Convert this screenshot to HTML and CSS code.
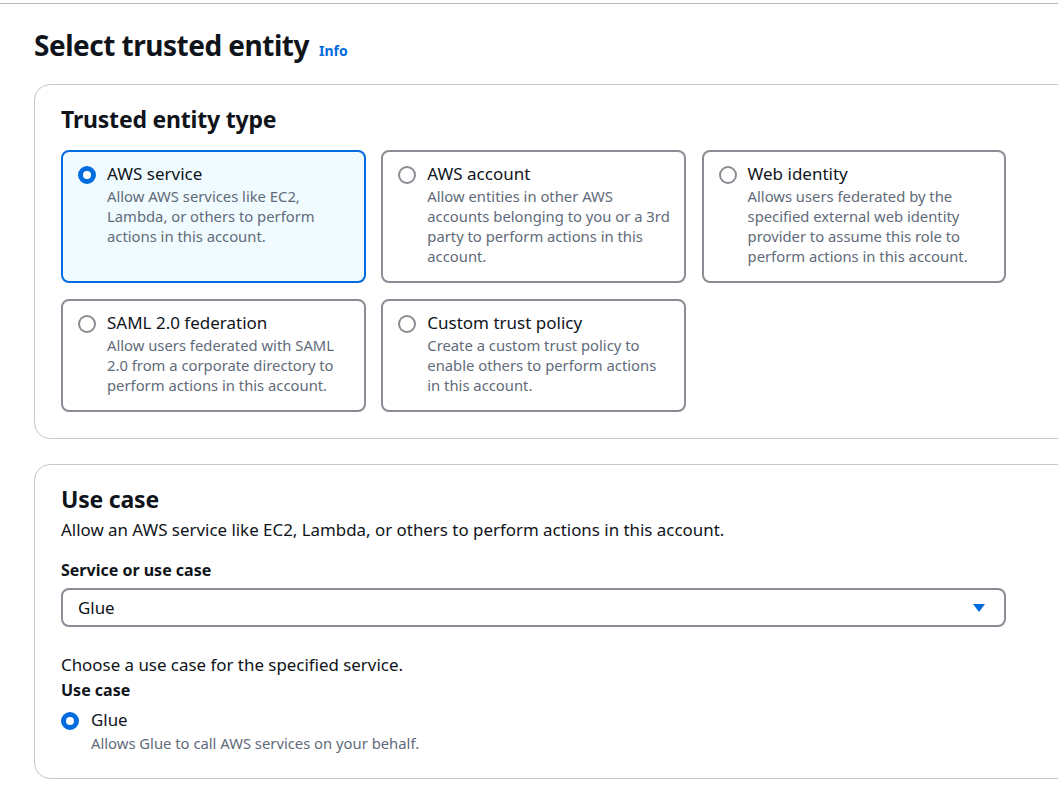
FILE: index.html
```html
<!DOCTYPE html>
<html>
<head>
<meta charset="utf-8">
<link rel="stylesheet" href="styles.css">
</head>
<body>
<div class="page">
  <div class="topline"></div>
  <h1 class="page-title">Select trusted entity <a class="info">Info</a></h1>

  <section class="panel panel-entity">
    <h2 class="panel-title">Trusted entity type</h2>
    <div class="tiles">
      <div class="tile selected">
        <span class="radio on"></span>
        <div class="tile-text">
          <div class="tile-title">AWS service</div>
          <div class="tile-desc">Allow AWS services like EC2, Lambda, or others to perform actions in this account.</div>
        </div>
      </div>
      <div class="tile">
        <span class="radio"></span>
        <div class="tile-text">
          <div class="tile-title">AWS account</div>
          <div class="tile-desc">Allow entities in other AWS accounts belonging to you or a 3rd party to perform actions in this account.</div>
        </div>
      </div>
      <div class="tile">
        <span class="radio"></span>
        <div class="tile-text">
          <div class="tile-title">Web identity</div>
          <div class="tile-desc">Allows users federated by the specified external web identity provider to assume this role to perform actions in this account.</div>
        </div>
      </div>
      <div class="tile">
        <span class="radio"></span>
        <div class="tile-text">
          <div class="tile-title">SAML 2.0 federation</div>
          <div class="tile-desc">Allow users federated with SAML 2.0 from a corporate directory to perform actions in this account.</div>
        </div>
      </div>
      <div class="tile">
        <span class="radio"></span>
        <div class="tile-text">
          <div class="tile-title">Custom trust policy</div>
          <div class="tile-desc">Create a custom trust policy to enable others to perform actions in this account.</div>
        </div>
      </div>
    </div>
  </section>

  <section class="panel panel-usecase">
    <h2 class="panel-title">Use case</h2>
    <p class="panel-desc">Allow an AWS service like EC2, Lambda, or others to perform actions in this account.</p>
    <div class="field-label">Service or use case</div>
    <div class="select">
      <span>Glue</span>
      <svg class="caret" width="14" height="10" viewBox="0 0 14 10"><path d="M1 1 H13 L7 9 Z" fill="#006ce0"/></svg>
    </div>
    <p class="hint">Choose a use case for the specified service.</p>
    <div class="field-label small">Use case</div>
    <div class="option">
      <span class="radio on"></span>
      <div>
        <div class="option-title">Glue</div>
        <div class="option-desc">Allows Glue to call AWS services on your behalf.</div>
      </div>
    </div>
  </section>
</div>
</body>
</html>
```

FILE: styles.css
```css
html, body {
  margin: 0;
  padding: 0;
  background: #ffffff;
  overflow: hidden;
}
body {
  font-family: "Noto Sans", "Open Sans", Arial, sans-serif;
  color: #0f141a;
  width: 1058px;
  height: 791px;
}
.page {
  padding-top: 3px;
}
.topline {
  border-top: 1px solid #b4b4bb;
  height: 0;
}
.page-title {
  margin: 24px 0 0 34px;
  font-size: 28px;
  line-height: 34px;
  font-weight: 700;
  letter-spacing: -0.5px;
  display: flex;
  align-items: baseline;
  gap: 10px;
}
.info {
  font-size: 14px;
  font-weight: 700;
  color: #006ce0;
  letter-spacing: 0;
}
.panel {
  margin-left: 34px;
  width: 1100px;
  border: 1px solid #c6c6cd;
  border-radius: 16px;
  box-sizing: border-box;
  padding: 20px 0 0 26px;
}
.panel-entity {
  margin-top: 16px;
  height: 355px;
}
.panel-usecase {
  margin-top: 25px;
  height: 315px;
}
.panel-title {
  margin: 0;
  font-size: 23px;
  line-height: 29px;
  font-weight: 700;
  letter-spacing: -0.2px;
}
.tiles {
  margin-top: 16px;
  display: grid;
  grid-template-columns: repeat(3, 304.7px);
  column-gap: 15.6px;
  row-gap: 16px;
}
.tile {
  border: 2px solid #8c8c94;
  border-radius: 8px;
  box-sizing: border-box;
  padding: 11px 12px 14px 15px;
  display: flex;
  gap: 11px;
  align-items: flex-start;
  min-height: 113px;
}
.tiles .tile:nth-child(-n+3) {
  height: 133px;
}
.tile.selected {
  border-color: #006ce0;
  background: #f0fbff;
}
.radio {
  flex: none;
  width: 18px;
  height: 18px;
  border-radius: 50%;
  border: 2px solid #8c8c94;
  box-sizing: border-box;
  background: #fff;
  margin-top: 3px;
}
.radio.on {
  border: 5px solid #006ce0;
}
.tile-title {
  font-size: 17px;
  line-height: 22px;
}
.tile-desc {
  margin-top: 1px;
  font-size: 14.8px;
  line-height: 20px;
  color: #5f6b7a;
}
.panel-desc {
  margin: 5px 0 0;
  font-size: 16.9px;
  line-height: 22px;
}
.field-label {
  margin-top: 18px;
  font-size: 16px;
  line-height: 22px;
  font-weight: 700;
}
.field-label.small {
  margin-top: 3px;
}
.select {
  margin-top: 7px;
  width: 945px;
  height: 39px;
  box-sizing: border-box;
  border: 2px solid #8c8c94;
  border-radius: 8px;
  display: flex;
  align-items: center;
  justify-content: space-between;
  padding: 0 18px 0 15px;
  font-size: 16.9px;
}
.hint {
  margin: 27px 0 0;
  font-size: 16.9px;
  line-height: 22px;
}
.option {
  margin-top: 8px;
  display: flex;
  gap: 12px;
  align-items: flex-start;
}
.option .radio {
  margin-top: 3px;
}
.option-title {
  font-size: 16.9px;
  line-height: 22px;
}
.option-desc {
  margin-top: 2px;
  font-size: 14.8px;
  line-height: 20px;
  color: #5f6b7a;
}
```
